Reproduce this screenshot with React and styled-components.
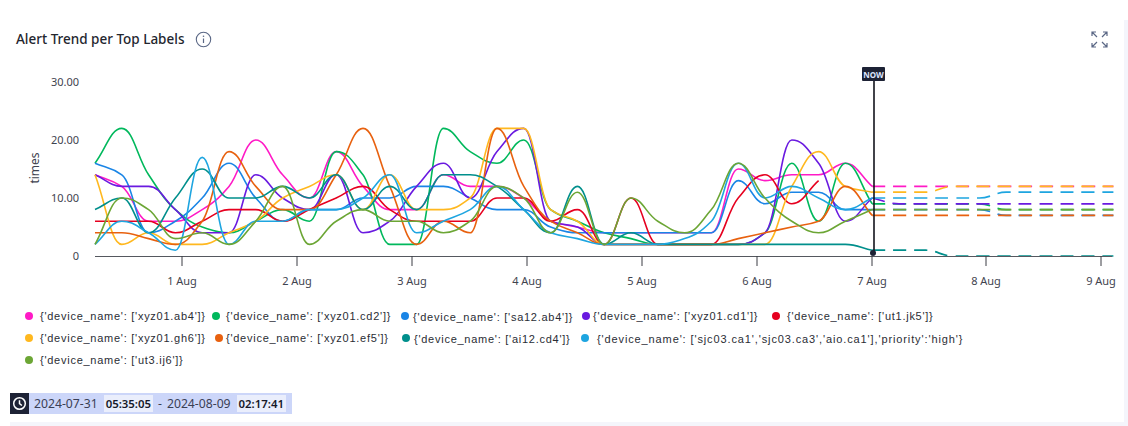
import React from 'react';
import styled, { createGlobalStyle } from 'styled-components';

const GlobalStyle = createGlobalStyle`
  html, body {
    margin: 0;
    padding: 0;
    background: #fff;
  }
`;

const Page = styled.div`
  width: 1128px;
  height: 426px;
  box-sizing: border-box;
  padding: 20px 0 0 10px;
  background: #fff;
  overflow: hidden;
`;

const Frame = styled.div`
  height: 100%;
  box-sizing: border-box;
  padding: 0 4px 4px 0;
  background: #f4f5fb;
`;

const Card = styled.div`
  height: 100%;
  background: #fff;
`;

const Header = styled.div`
  display: flex;
  align-items: center;
  justify-content: space-between;
  padding: 9px 16px 0 6px;
  height: 20px;
`;

const TitleWrap = styled.div`
  display: flex;
  align-items: center;
  gap: 11px;
`;

const Title = styled.h2`
  margin: 0;
  font: 500 13.5px/20px "Noto Sans", sans-serif;
  color: #23262e;
`;

const IconBtn = styled.span`
  display: inline-flex;
  color: #5a6785;
`;

const ChartWrap = styled.div`
  height: 256px;
`;

const Legend = styled.ul`
  list-style: none;
  margin: 0;
  padding: 0 0 0 15px;
  height: 72px;
  display: flex;
  flex-direction: column;
`;

const LegendRow = styled.li`
  display: flex;
  height: 22px;
  align-items: center;
`;

const LegendItem = styled.span`
  display: inline-flex;
  align-items: center;
  width: ${(p) => p.$w}px;
  font: 400 11px/14px "Liberation Sans", Arial, sans-serif;
  letter-spacing: ${(p) => (p.$wide ? 0.88 : 0.74)}px;
  color: #2a2d35;
  white-space: nowrap;
`;

const Dot = styled.i`
  width: 8px;
  height: 8px;
  border-radius: 50%;
  background: ${(p) => p.$c};
  margin-right: ${(p) => p.$gap}px;
  flex: none;
`;

const LegendLabel = styled.span`
  margin-top: ${(p) => (p.$drop ? 2 : 0)}px;
`;

const TimeBar = styled.div`
  display: inline-flex;
  align-items: stretch;
  height: 21px;
  background: #ccd6f9;
  margin-top: 16px;
  font: 400 12.2px/21px "Noto Sans", sans-serif;
  color: #3a4055;
`;

const ClockBox = styled.span`
  width: 19px;
  background: #1d2235;
  display: flex;
  align-items: center;
  justify-content: center;
  color: #fff;
`;

const DatePart = styled.span`
  padding: 0 6px 0 5px;
`;

const TimePart = styled.span`
  background: #eaeefc;
  font-weight: 600;
  font-size: 11.4px;
  color: #16192a;
  padding: 0 2px;
  margin: 2px 0;
  line-height: 17px;
`;

const Sep = styled.span`
  padding: 0 0 0 5px;
`;

const BarEnd = styled.span`
  width: 6px;
`;

const defs = {
  magenta: { c: '#ff1ac6', v: [14,12,6,6,8,12,20,14,10,18,12,8,8,14,12,12,10,6,5,4,4,4,4,4,15,13,14,14,16,12], f: [12,12,12,12,12,12,12,12,12] },
  green: { c: '#00b85c', v: [16,22,14,8,5,4,6,8,6,18,14,2,2,22,18,16,20,8,6,4,3,2,2,2,2,4,16,6,16,9], f: [9,9,9,9,8,8,8,8,8] },
  blue: { c: '#1a85e6', v: [16,14,4,6,10,16,10,6,8,8,10,10,12,12,10,8,8,5,4,4,4,4,4,4,13,9,11,11,8,8], f: [8,8,8,8,7,7,7,7,7] },
  purple: { c: '#6a1ae0', v: [14,12,12,8,4,4,14,10,8,14,4,6,12,16,10,18,22,6,5,2,2,2,2,2,2,4,20,16,6,10], f: [9,9,9,9,9,9,9,9,9] },
  red: { c: '#e6001f', v: [6,6,6,4,6,8,8,6,8,10,12,8,6,6,6,10,10,6,8,2,10,2,2,2,10,14,9,13] },
  yellow: { c: '#ffb81f', v: [14,2,4,2,2,4,6,10,12,14,8,14,8,8,10,22,22,8,6,2,2,2,2,2,2,2,12,18,12,11], f: [11,11,12,12,12,12,12,12,12] },
  orange: { c: '#e8610f', v: [4,4,3,2,6,18,12,8,8,14,22,12,2,6,4,22,12,6,4,2,2,2,2,2,3,4,5,6,12,7], f: [7,7,7,7,7,7,7,7,7] },
  teal: { c: '#008f8c', v: [8,10,4,10,15,10,10,12,10,14,8,12,8,14,14,12,8,4,12,2,4,2,2,2,2,2,2,2,2,1], f: [1,1,0,0,0,0,0,0,0] },
  sky: { c: '#1ea5e0', v: [2,6,4,1,17,2,6,6,8,8,10,14,4,6,8,12,8,4,3,2,2,2,3,6,16,10,12,10,8,10], f: [10,10,10,10,11,11,11,11,11] },
  olive: { c: '#6ca635', v: [2,10,8,3,4,2,6,12,2,6,8,6,6,4,6,12,10,4,11,2,10,6,4,8,16,10,6,4,6,8], f: [8,8,8,8,8,8,8,8,8] },
};

const X0 = 85;
const STEP = 26.8;
const Y0 = 207;
const UNIT = 5.8;

const px = (i) => X0 + i * STEP;
const py = (v) => Y0 - v * UNIT;

// monotone cubic through the points, same look as the chart lib's smooth line
const smoothPath = (pts) => {
  const n = pts.length;
  const slope = [];
  for (let i = 0; i < n - 1; i++) slope.push((pts[i + 1][1] - pts[i][1]) / (pts[i + 1][0] - pts[i][0]));
  const t = pts.map((_, i) => {
    if (i === 0) return slope[0];
    if (i === n - 1) return slope[n - 2];
    if (slope[i - 1] * slope[i] <= 0) return 0;
    return (2 * slope[i - 1] * slope[i]) / (slope[i - 1] + slope[i]);
  });
  let d = `M${pts[0][0].toFixed(1)} ${pts[0][1].toFixed(1)}`;
  for (let i = 0; i < n - 1; i++) {
    const h = (pts[i + 1][0] - pts[i][0]) / 2.4;
    d += `C${(pts[i][0] + h).toFixed(1)} ${(pts[i][1] + t[i] * h).toFixed(1)} ${(pts[i + 1][0] - h).toFixed(1)} ${(pts[i + 1][1] - t[i + 1] * h).toFixed(1)} ${pts[i + 1][0].toFixed(1)} ${pts[i + 1][1].toFixed(1)}`;
  }
  return d;
};

const toPts = (vals, start = 0) => vals.map((v, i) => [px(i + start), py(v)]);

const ticks = [
  [172, '1 Aug'], [287, '2 Aug'], [402, '3 Aug'], [517, '4 Aug'], [632, '5 Aug'],
  [747, '6 Aug'], [862, '7 Aug'], [976, '8 Aug'], [1091, '9 Aug'],
];

const yLabels = [[0, '0'], [10, '10.00'], [20, '20.00'], [30, '30.00']];

const AxisText = styled.text`
  font: 400 ${(p) => p.$size || 11}px "Noto Sans", sans-serif;
  fill: #3f444f;
`;

const NowText = styled.text`
  font: 700 8px "Noto Sans", sans-serif;
  fill: #dfe6ff;
`;

const Chart = () => {
  const drawOrder = ['magenta', 'green', 'blue', 'purple', 'red', 'yellow', 'orange', 'teal', 'sky', 'olive'];
  return (
    <svg width="1114" height="256" viewBox="0 0 1114 256" style={{ display: 'block' }}>
      {yLabels.map(([v, t]) => (
        <AxisText key={t} x="69" y={py(v) + 4} textAnchor="end">{t}</AxisText>
      ))}
      <AxisText $size={12} transform="translate(29 119) rotate(-90)" textAnchor="middle">times</AxisText>

      {drawOrder.map((k) => (
        <path key={k} d={smoothPath(toPts(defs[k].v))} fill="none" stroke={defs[k].c} strokeWidth="1.6" />
      ))}
      {drawOrder.filter((k) => defs[k].f).map((k) => (
        <path
          key={k}
          d={smoothPath(toPts([defs[k].v[29], ...defs[k].f], 29))}
          fill="none"
          stroke={defs[k].c}
          strokeWidth="1.7"
          strokeDasharray="13 8"
        />
      ))}

      <line x1={X0} x2="1102" y1={Y0 + 0.5} y2={Y0 + 0.5} stroke="#55585f" strokeWidth="1" />
      {ticks.map(([x, t]) => (
        <g key={t}>
          <line x1={x} x2={x} y1={Y0} y2={Y0 + 10} stroke="#3a3d44" strokeWidth="1" />
          <AxisText x={x} y={Y0 + 29} textAnchor="middle">{t}</AxisText>
        </g>
      ))}

      <line x1="864" x2="864" y1="32" y2={Y0 - 3} stroke="#12141c" strokeWidth="1.6" />
      <circle cx="863" cy={Y0 - 3} r="3" fill="#1d2235" />
      <rect x="852" y="18" width="23" height="14" rx="1" fill="#1d2235" />
      <NowText x="863.5" y="28.5" textAnchor="middle">NOW</NowText>
    </svg>
  );
};

const legendRows = [
  [
    ['magenta', "{'device_name': ['xyz01.ab4']}", 187, 7],
    ['green', "{'device_name': ['xyz01.cd2']}", 189, 6],
    ['blue', "{'device_name': ['sa12.ab4']}", 181, 4, true],
    ['purple', "{'device_name': ['xyz01.cd1']}", 190, 3],
    ['red', "{'device_name': ['ut1.jk5']}", 170, 7],
  ],
  [
    ['yellow', "{'device_name': ['xyz01.gh6']}", 190, 7],
    ['orange', "{'device_name': ['xyz01.ef5']}", 187, 3],
    ['teal', "{'device_name': ['ai12.cd4']}", 179, 4, true],
    ['sky', "{'device_name': ['sjc03.ca1','sjc03.ca3','aio.ca1'],'priority':'high'}", 400, 8, true],
  ],
  [['olive', "{'device_name': ['ut3.ij6']}", 187, 7]],
];

export default function App() {
  return (
    <Page>
      <GlobalStyle />
      <Frame>
        <Card>
          <Header>
            <TitleWrap>
              <Title>Alert Trend per Top Labels</Title>
              <IconBtn>
                <svg width="17" height="17" viewBox="0 0 17 17" fill="none" stroke="currentColor">
                  <circle cx="8.5" cy="8.5" r="7.2" strokeWidth="1.1" />
                  <path d="M8.5 7.5v4.5" strokeWidth="1.2" />
                  <circle cx="8.5" cy="5.2" r="0.8" fill="currentColor" stroke="none" />
                </svg>
              </IconBtn>
            </TitleWrap>
            <IconBtn>
              <svg width="17" height="17" viewBox="0 0 17 17" fill="none" stroke="currentColor" strokeWidth="1.2">
                <path d="M1 5V1h4M1 1l5 5M12 1h4v4M16 1l-5 5M1 12v4h4M1 16l5-5M16 12v4h-4M16 16l-5-5" />
              </svg>
            </IconBtn>
          </Header>
          <ChartWrap>
            <Chart />
          </ChartWrap>
          <Legend>
            {legendRows.map((row, i) => (
              <LegendRow key={i}>
                {row.map(([k, text, w, gap, drop]) => (
                  <LegendItem key={k} $w={w} $wide={k === 'sky'}>
                    <Dot $c={defs[k].c} $gap={gap} />
                    <LegendLabel $drop={drop}>{text}</LegendLabel>
                  </LegendItem>
                ))}
              </LegendRow>
            ))}
          </Legend>
          <TimeBar>
            <ClockBox>
              <svg width="15" height="15" viewBox="0 0 15 15" fill="none" stroke="currentColor" strokeWidth="1.5">
                <circle cx="7.5" cy="7.5" r="5.8" />
                <path d="M7.5 4.2v3.5l2.4 1.8" />
              </svg>
            </ClockBox>
            <DatePart>2024-07-31</DatePart>
            <TimePart>05:35:05</TimePart>
            <Sep>-</Sep>
            <DatePart>2024-08-09</DatePart>
            <TimePart>02:17:41</TimePart>
            <BarEnd />
          </TimeBar>
        </Card>
      </Frame>
    </Page>
  );
}
